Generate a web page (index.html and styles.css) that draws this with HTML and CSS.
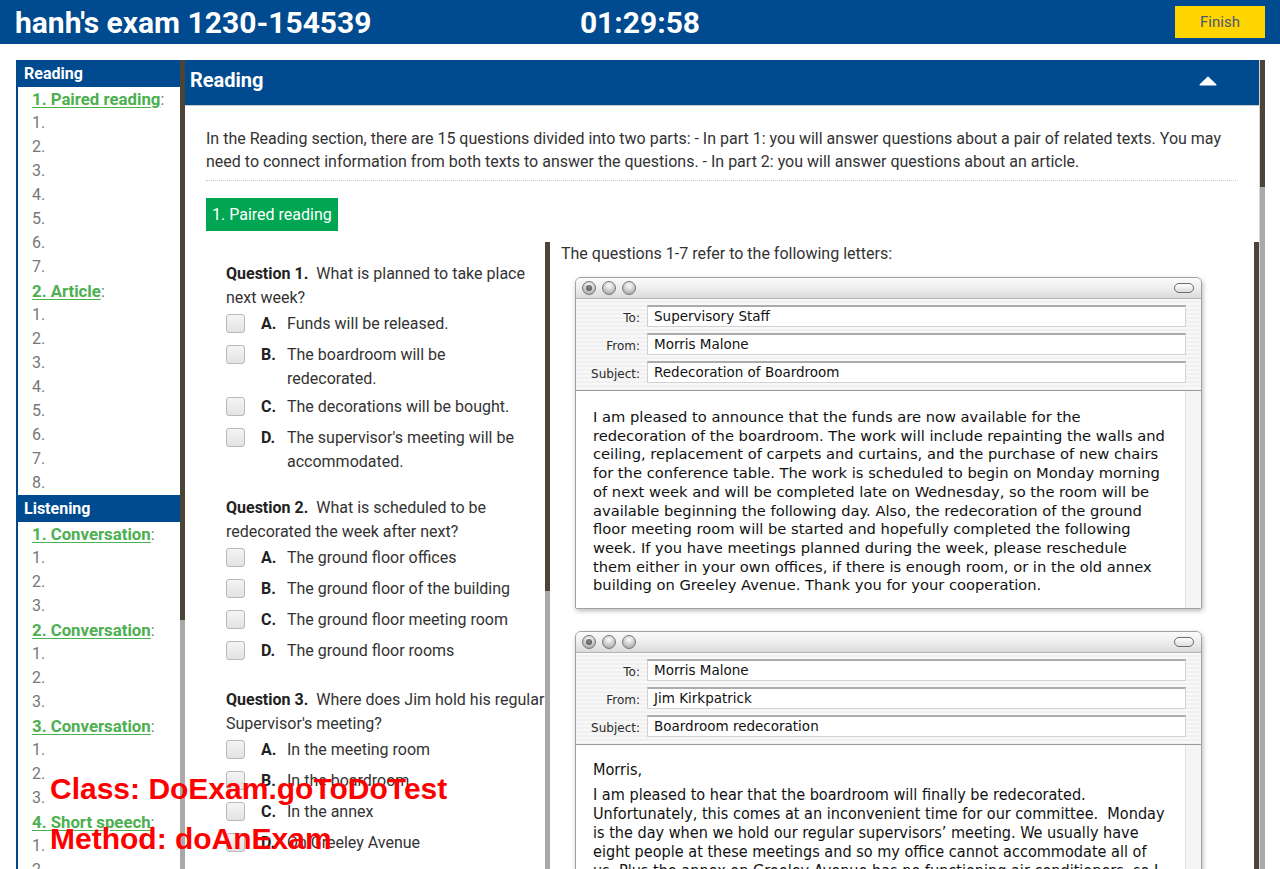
FILE: index.html
```html
<!DOCTYPE html>
<html lang="en">
<head>
<meta charset="utf-8">
<title>hanh's exam 1230-154539</title>
<link rel="stylesheet" href="styles.css">
</head>
<body>
<header class="topbar">
  <div class="title">hanh's exam 1230-154539</div>
  <div class="timer">01:29:58</div>
  <button class="finish">Finish</button>
</header>

<div class="layout">
  <nav class="sidebar">
    <div class="sec-head">Reading</div>
    <ul class="sec-list">
      <li><a class="part">1. Paired reading</a>:</li>
      <li>1.</li><li>2.</li><li>3.</li><li>4.</li><li>5.</li><li>6.</li><li>7.</li>
      <li><a class="part">2. Article</a>:</li>
      <li>1.</li><li>2.</li><li>3.</li><li>4.</li><li>5.</li><li>6.</li><li>7.</li><li>8.</li>
    </ul>
    <div class="sec-head">Listening</div>
    <ul class="sec-list">
      <li><a class="part">1. Conversation</a>:</li>
      <li>1.</li><li>2.</li><li>3.</li>
      <li><a class="part">2. Conversation</a>:</li>
      <li>1.</li><li>2.</li><li>3.</li>
      <li><a class="part">3. Conversation</a>:</li>
      <li>1.</li><li>2.</li><li>3.</li>
      <li><a class="part">4. Short speech</a>:</li>
      <li>1.</li><li>2.</li><li>3.</li>
    </ul>
  </nav>
  <div class="scrollbar sb-side"><div class="thumb"></div></div>

  <main class="panel">
    <div class="panel-head">
      <h2>Reading</h2>
      <svg class="caret" width="18" height="10" viewBox="0 0 18 10"><path d="M9 1.2 L16.8 8.8 H1.2 Z" fill="#fff" stroke="#fff" stroke-width="1.4" stroke-linejoin="round"/></svg>
    </div>
    <div class="panel-body">
      <p class="intro">In the Reading section, there are 15 questions divided into two parts: - In part 1: you will answer questions about a pair of related texts. You may need to connect information from both texts to answer the questions. - In part 2: you will answer questions about an article.</p>
      <button class="part-btn">1. Paired reading</button>

      <div class="columns">
        <div class="questions">
          <div class="question">
            <p class="q-text"><b>Question 1.</b>&nbsp; What is planned to take place next week?</p>
            <div class="option"><span class="cb"></span><b class="opt-key">A.</b><span class="opt-text">Funds will be released.</span></div>
            <div class="option"><span class="cb"></span><b class="opt-key">B.</b><span class="opt-text">The boardroom will be redecorated.</span></div>
            <div class="option"><span class="cb"></span><b class="opt-key">C.</b><span class="opt-text">The decorations will be bought.</span></div>
            <div class="option"><span class="cb"></span><b class="opt-key">D.</b><span class="opt-text">The supervisor's meeting will be accommodated.</span></div>
          </div>
          <div class="question">
            <p class="q-text"><b>Question 2.</b>&nbsp; What is scheduled to be redecorated the week after next?</p>
            <div class="option"><span class="cb"></span><b class="opt-key">A.</b><span class="opt-text">The ground floor offices</span></div>
            <div class="option"><span class="cb"></span><b class="opt-key">B.</b><span class="opt-text">The ground floor of the building</span></div>
            <div class="option"><span class="cb"></span><b class="opt-key">C.</b><span class="opt-text">The ground floor meeting room</span></div>
            <div class="option"><span class="cb"></span><b class="opt-key">D.</b><span class="opt-text">The ground floor rooms</span></div>
          </div>
          <div class="question">
            <p class="q-text q-wide"><b>Question 3.</b>&nbsp; Where does Jim hold his regular Supervisor's meeting?</p>
            <div class="option"><span class="cb"></span><b class="opt-key">A.</b><span class="opt-text">In the meeting room</span></div>
            <div class="option"><span class="cb"></span><b class="opt-key">B.</b><span class="opt-text">In the boardroom</span></div>
            <div class="option"><span class="cb"></span><b class="opt-key">C.</b><span class="opt-text">In the annex</span></div>
            <div class="option"><span class="cb"></span><b class="opt-key">D.</b><span class="opt-text">On Greeley Avenue</span></div>
          </div>
        </div>
        <div class="scrollbar sb-q"><div class="thumb"></div></div>

        <div class="passage">
          <p class="passage-lead">The questions 1-7 refer to the following letters:</p>

          <div class="mac">
            <div class="mac-bar"><span class="dot dot-close"></span><span class="dot"></span><span class="dot"></span><span class="pill"></span></div>
            <div class="mac-head">
              <div class="mac-row"><span class="mac-label">To:</span><span class="mac-field">Supervisory Staff</span></div>
              <div class="mac-row"><span class="mac-label">From:</span><span class="mac-field">Morris Malone</span></div>
              <div class="mac-row"><span class="mac-label">Subject:</span><span class="mac-field">Redecoration of Boardroom</span></div>
            </div>
            <div class="mac-body body-one">
              <p>I am pleased to announce that the funds are now available for the<br>redecoration of the boardroom. The work will include repainting the walls and<br>ceiling, replacement of carpets and curtains, and the purchase of new chairs<br>for the conference table. The work is scheduled to begin on Monday morning<br>of next week and will be completed late on Wednesday, so the room will be<br>available beginning the following day. Also, the redecoration of the ground<br>floor meeting room will be started and hopefully completed the following<br>week. If you have meetings planned during the week, please reschedule<br>them either in your own offices, if there is enough room, or in the old annex<br>building on Greeley Avenue. Thank you for your cooperation.</p>
              <span class="grip"></span>
            </div>
          </div>

          <div class="mac mac-second">
            <div class="mac-bar"><span class="dot dot-close"></span><span class="dot"></span><span class="dot"></span><span class="pill"></span></div>
            <div class="mac-head">
              <div class="mac-row"><span class="mac-label">To:</span><span class="mac-field">Morris Malone</span></div>
              <div class="mac-row"><span class="mac-label">From:</span><span class="mac-field">Jim Kirkpatrick</span></div>
              <div class="mac-row"><span class="mac-label">Subject:</span><span class="mac-field">Boardroom redecoration</span></div>
            </div>
            <div class="mac-body body-two">
              <p>Morris,</p>
              <p>I am pleased to hear that the boardroom will finally be redecorated.<br>Unfortunately, this comes at an inconvenient time for our committee.&nbsp; Monday<br>is the day when we hold our regular supervisors’ meeting. We usually have<br>eight people at these meetings and so my office cannot accommodate all of<br>us. Plus the annex on Greeley Avenue has no functioning air conditioners, so I<br>think we will have to find another place to meet.</p>
            </div>
          </div>
        </div>
        <div class="scrollbar sb-p"><div class="thumb"></div></div>
      </div>
    </div>
  </main>
  <div class="scrollbar sb-main"><div class="thumb"></div></div>
</div>

<div class="debug">Class: DoExam.goToDoTest<br>Method: doAnExam</div>
</body>
</html>
```

FILE: styles.css
```css
* { box-sizing: border-box; }
html, body { margin: 0; padding: 0; }
body {
  width: 1280px;
  height: 869px;
  overflow: hidden;
  font-family: Roboto, "Liberation Sans", Arial, sans-serif;
  color: #333;
  background: #fff;
  position: relative;
}
p { margin: 0; }
ul { margin: 0; padding: 0; list-style: none; }

/* top bar */
.topbar {
  height: 44px;
  background: #004a8f;
  display: grid;
  grid-template-columns: 1fr auto 1fr;
  align-items: center;
  padding: 0 15px;
  color: #fff;
}
.title { font-size: 30px; font-weight: 700; }
.timer { font-size: 30px; font-weight: 700; }
.finish {
  justify-self: end;
  width: 90px;
  height: 32px;
  border: none;
  background: #ffd500;
  color: #4b5877;
  font-family: Roboto, "Liberation Sans", sans-serif;
  font-size: 15px;
  padding: 0;
}

/* main layout */
.layout {
  display: flex;
  height: 809px;
  margin-top: 16px;
  padding: 0 15px 0 16px;
}

/* fake scrollbars */
.scrollbar { width: 5px; flex: none; background: #a9a9a9; display: flex; flex-direction: column; }
.scrollbar .thumb { background: #4b4437; }
.sb-side .thumb { height: 560px; }
.sb-main .thumb { height: 127px; }
.sb-q .thumb { height: 349px; }
.sb-p .thumb { height: 100%; }

/* sidebar */
.sidebar {
  width: 164px;
  flex: none;
  border-left: 2px solid #004a8f;
  overflow: hidden;
  font-size: 16px;
}
.sec-head {
  height: 27px;
  line-height: 27px;
  background: #004a8f;
  color: #fff;
  font-weight: 700;
  font-size: 16px;
  padding-left: 6px;
}
.sec-list li {
  height: 24px;
  line-height: 24px;
  padding-left: 14px;
  color: #777;
}
.part {
  color: #4caf50;
  font-weight: 700;
  font-size: 16.8px;
  text-decoration: underline;
  text-underline-offset: 2px;
}

/* panel */
.panel {
  width: 1075px;
  flex: none;
  border-right: 1px solid #d6d6d6;
  display: flex;
  flex-direction: column;
  overflow: hidden;
}
.panel-head {
  height: 46px;
  flex: none;
  background: #004a8f;
  border-bottom: 1px solid #c9c9c9;
  display: flex;
  align-items: center;
  justify-content: space-between;
  padding: 0 42px 5px 5px;
}
.panel-head h2 { margin: 0; color: #fff; font-size: 20px; font-weight: 700; }
.caret { display: block; margin-top: 1px; }

.panel-body { padding: 21px 21px 0 21px; flex: 1; min-height: 0; display: flex; flex-direction: column; align-items: flex-start; }
.intro {
  font-size: 16px;
  line-height: 23px;
  color: #333;
  padding-bottom: 7px;
  border-bottom: 1px dotted #c8c8c8;
  width: 100%;
}
.part-btn {
  margin-top: 17px;
  height: 33px;
  padding: 0 6px;
  border: none;
  background: #00a651;
  color: #fff;
  font-family: Roboto, "Liberation Sans", sans-serif;
  font-size: 16px;
}

.columns {
  margin-top: 11px;
  margin-right: -21px;
  align-self: stretch;
  flex: 1;
  min-height: 0;
  display: flex;
  overflow: hidden;
}

/* questions */
.questions {
  width: 339px;
  flex: none;
  padding: 20px 0 0 20px;
  font-size: 16px;
  color: #333;
  overflow: hidden;
}
.question { margin-bottom: 22px; }
.q-text { line-height: 24px; width: 320px; margin-bottom: 2px; }
.q-wide { width: 330px; }
.q-text b { color: #222; }
.option { display: flex; align-items: flex-start; line-height: 24px; margin-bottom: 4px; }
.cb {
  width: 19px;
  height: 19px;
  flex: none;
  margin: 2px 0 6px;
  border: 1px solid #b9b9b9;
  border-radius: 3px;
  background: linear-gradient(#f4f4f4, #e3e3e3);
}
.opt-key { width: 26px; flex: none; margin-left: 16px; color: #222; }
.opt-text { width: 236px; }

/* passage */
.passage {
  flex: 1;
  min-width: 0;
  padding: 1px 0 0 11px;
  overflow: hidden;
}
.passage-lead { font-size: 16px; line-height: 22px; color: #333; }

.mac {
  width: 627px;
  margin: 12px 0 0 14px;
  border: 1px solid #a2a2a2;
  border-radius: 6px 6px 2px 2px;
  box-shadow: 1px 2px 5px rgba(0,0,0,.28);
  background: #f3f3f3;
  overflow: hidden;
}
.mac-second { margin-top: 22px; }
.mac-bar {
  height: 21px;
  display: flex;
  align-items: center;
  gap: 6px;
  padding: 0 6px 0 6px;
  background: linear-gradient(#fbfbfb, #ececec 55%, #dadada);
  border-bottom: 1px solid #b3b3b3;
}
.dot {
  width: 14px;
  height: 14px;
  border-radius: 50%;
  border: 1px solid #767676;
  background: radial-gradient(circle at 50% 30%, #ffffff 0, #d2d2d2 45%, #979797 100%);
  position: relative;
}
.dot-close::after {
  content: "";
  position: absolute;
  left: 3px; top: 3px;
  width: 6px; height: 6px;
  border-radius: 50%;
  background: radial-gradient(circle at 50% 40%, #8a8a8a, #4a4a4a);
}
.pill {
  margin-left: auto;
  margin-right: 1px;
  width: 20px;
  height: 10px;
  border: 1.5px solid #6d6d6d;
  border-radius: 6px;
  background: linear-gradient(#ffffff, #dcdcdc);
}
.mac-head {
  padding: 3px 15px 4px 0;
  background: repeating-linear-gradient(#f8f8f8 0 2px, #f0f0f0 2px 4px);
  border-bottom: 1px solid #9b9b9b;
}
.mac-row { display: flex; align-items: center; height: 28px; }
.mac-label {
  width: 71px;
  flex: none;
  text-align: right;
  padding-right: 7px;
  font-family: "DejaVu Sans", Verdana, sans-serif;
  font-size: 12px;
  color: #2a2a2a;
  padding-top: 3px;
}
.mac-field {
  flex: 1;
  height: 22px;
  line-height: 19px;
  border: 1px solid #d2d2d2;
  border-top: 2px solid #ababab;
  background: #fff;
  padding-left: 6px;
  font-family: "DejaVu Sans", Verdana, sans-serif;
  font-size: 13.5px;
  color: #111;
  white-space: nowrap;
}
.mac-body {
  position: relative;
  background: #fff;
  border-right: 15px solid #f5f5f5;
  box-shadow: inset -1px 0 0 #e2e2e2;
  color: #111;
  white-space: nowrap;
  overflow: hidden;
}
.body-one {
  padding: 17px 0 13px 17px;
  font-family: "DejaVu Sans", Verdana, sans-serif;
  font-size: 14.7px;
  line-height: 18.7px;
}
.body-two {
  padding: 15px 0 14px 17px;
  font-family: "DejaVu Sans Condensed", "DejaVu Sans", sans-serif;
  font-size: 16.1px;
  line-height: 19px;
}
.body-two p + p { margin-top: 6px; }
.grip {
  position: absolute;
  right: -14px;
  bottom: 1px;
  width: 11px;
  height: 11px;
  background: linear-gradient(135deg, transparent 0 45%, #bdbdbd 45% 52%, transparent 52% 65%, #bdbdbd 65% 72%, transparent 72% 85%, #bdbdbd 85% 92%, transparent 92%);
}

/* debug overlay */
.debug {
  position: absolute;
  left: 50px;
  top: 764px;
  color: #ff0000;
  font-family: "Liberation Sans", Arial, sans-serif;
  font-weight: 700;
  font-size: 30px;
  line-height: 50px;
  pointer-events: none;
}
```
